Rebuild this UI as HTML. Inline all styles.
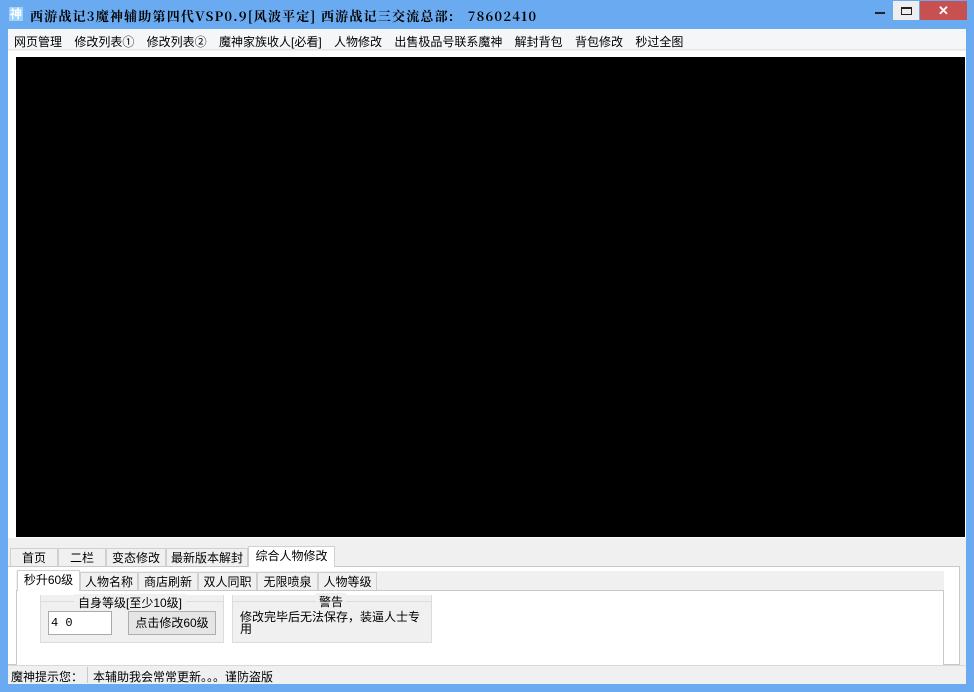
<!DOCTYPE html><html><head><meta charset="utf-8"><style>
*{margin:0;padding:0;box-sizing:border-box}
body{width:974px;height:692px;background:#6aaaf0;position:relative;overflow:hidden;font-family:"Liberation Sans","WenQuanYi Zen Hei","Noto Sans CJK SC",sans-serif;font-size:12px;color:#000}
.a{position:absolute}
.t{white-space:nowrap}
.tab{position:absolute;background:#f0f0f0;border:1px solid #d0d0d0;text-align:center;line-height:18px;font-size:12px}
</style></head><body>
<div class="a" style="left:9px;top:7px;width:14px;height:14px;color:#fff;font-size:12px;font-weight:bold;line-height:14px;text-align:center;background:#9cd0ff">神</div>
<div class="a t" style="left:30px;top:6px;font-size:13px;font-weight:bold;letter-spacing:1.2px;font-family:'Noto Serif CJK SC','WenQuanYi Zen Hei',serif">西游战记3魔神辅助第四代VSP0.9[风波平定] 西游战记三交流总部:&nbsp;&nbsp;&nbsp;78602410</div>
<div class="a" style="left:875px;top:12px;width:10px;height:2px;background:#222"></div>
<div class="a" style="left:893px;top:1px;width:26px;height:19px;background:#eee"></div>
<div class="a" style="left:901px;top:7px;width:11px;height:8px;border:1px solid #222;border-top-width:2px"></div>
<div class="a" style="left:920px;top:1px;width:47px;height:19px;background:#c75050;color:#fff;text-align:center;font-weight:bold;font-size:13px;line-height:19px">✕</div>
<div class="a" style="left:8px;top:29px;width:958px;height:655px;background:#f0f0f0"></div>
<div class="a" style="left:8px;top:29px;width:958px;height:21px;background:#f5f6f7;border-bottom:1px solid #e6e6e6"></div>
<div class="a t" style="left:14px;top:33px;word-spacing:9px">网页管理 修改列表① 修改列表② 魔神家族收人[必看] 人物修改 出售极品号联系魔神 解封背包 背包修改 秒过全图</div>
<div class="a" style="left:8px;top:51px;width:958px;height:487px;background:#fff"></div>
<div class="a" style="left:16px;top:57px;width:949px;height:480px;background:#000"></div>
<div class="tab" style="left:10px;top:548px;width:48px;height:19px">首页</div>
<div class="tab" style="left:58px;top:548px;width:48px;height:19px">二栏</div>
<div class="tab" style="left:106px;top:548px;width:60px;height:19px">变态修改</div>
<div class="tab" style="left:166px;top:548px;width:82px;height:19px">最新版本解封</div>
<div class="a" style="left:8px;top:566px;width:952px;height:99px;background:#fff;border:1px solid #c8c8c8;border-left:none"></div>
<div class="tab" style="left:248px;top:546px;width:87px;height:21px;background:#fff;border-bottom:none">综合人物修改</div>
<div class="a" style="left:16px;top:571px;width:928px;height:20px;background:#f0f0f0"></div>
<div class="tab" style="left:80px;top:572px;width:58px;height:19px">人物名称</div>
<div class="tab" style="left:138px;top:572px;width:60px;height:19px">商店刷新</div>
<div class="tab" style="left:198px;top:572px;width:59px;height:19px">双人同职</div>
<div class="tab" style="left:257px;top:572px;width:61px;height:19px">无限喷泉</div>
<div class="tab" style="left:318px;top:572px;width:59px;height:19px">人物等级</div>
<div class="a" style="left:16px;top:590px;width:928px;height:77px;border:1px solid #c8c8c8;background:#fff"></div>
<div class="tab" style="left:17px;top:570px;width:63px;height:21px;background:#fff;border-bottom:none">秒升60级</div>
<div class="a" style="left:40px;top:595px;width:184px;height:48px;background:#f0f0f0;border:1px solid #dcdcdc;border-top:none"></div>
<div class="a" style="left:40px;top:601px;width:184px;height:1px;background:#dcdcdc"></div>
<div class="a t" style="left:74px;top:594px;background:#f0f0f0;padding:0 4px">自身等级[至少10级]</div>
<div class="a" style="left:48px;top:611px;width:64px;height:24px;background:#fff;border:1px solid #aaa;line-height:22px;padding-left:2px;font-family:'Liberation Mono',monospace">4 0</div>
<div class="a" style="left:128px;top:611px;width:88px;height:24px;background:#e5e5e5;border:1px solid #adadad;text-align:center;line-height:22px">点击修改60级</div>
<div class="a" style="left:232px;top:595px;width:200px;height:48px;background:#f0f0f0;border:1px solid #dcdcdc;border-top:none"></div>
<div class="a" style="left:232px;top:601px;width:200px;height:1px;background:#dcdcdc"></div>
<div class="a t" style="left:316px;top:593px;background:#f0f0f0;padding:0 3px">警告</div>
<div class="a" style="left:240px;top:611px;width:190px;line-height:12px">修改完毕后无法保存，装逼人士专用</div>
<div class="a" style="left:8px;top:665px;width:958px;height:19px;background:#f0f0f0;border-top:1px solid #d8d8d8"></div>
<div class="a" style="left:87px;top:667px;width:1px;height:16px;background:#c8c8c8"></div>
<div class="a t" style="left:11px;top:668px">魔神提示您：</div>
<div class="a t" style="left:93px;top:668px">本辅助我会常常更新。。。谨防盗版</div>
</body></html>
